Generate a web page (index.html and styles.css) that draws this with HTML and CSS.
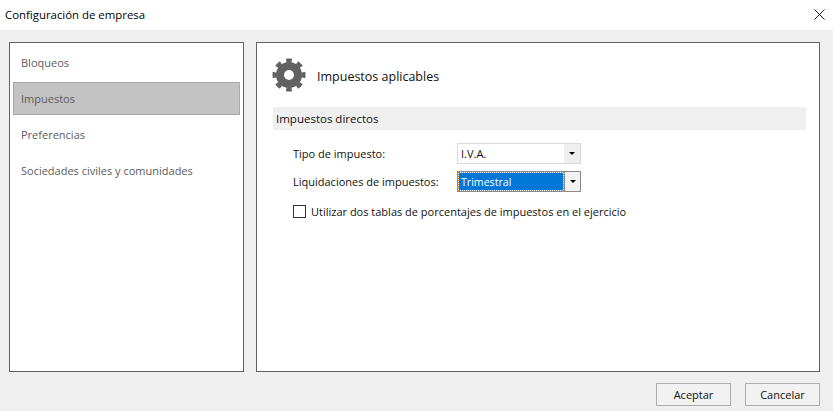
FILE: index.html
```html
<!DOCTYPE html>
<html lang="es">
<head>
<meta charset="utf-8">
<title>Configuración de empresa</title>
<link rel="stylesheet" href="styles.css">
</head>
<body>
<div class="dialog">
  <header class="titlebar">
    <span class="title">Configuración de empresa</span>
    <svg class="close" width="11" height="11" viewBox="0 0 11 11"><path d="M0.5 0.5L10.5 10.5M10.5 0.5L0.5 10.5" stroke="#222" stroke-width="1" fill="none"/></svg>
  </header>
  <main class="body">
    <nav class="sidebar">
      <a class="nav-item">Bloqueos</a>
      <a class="nav-item selected">Impuestos</a>
      <a class="nav-item">Preferencias</a>
      <a class="nav-item">Sociedades civiles y comunidades</a>
    </nav>
    <section class="content">
      <div class="heading">
        <svg class="gear" width="34" height="34" viewBox="0 0 34 34">
          <circle cx="17" cy="17" r="9" fill="none" stroke="#616161" stroke-width="8"/>
          <circle cx="17" cy="17" r="14.5" fill="none" stroke="#616161" stroke-width="4" pathLength="88" stroke-dasharray="5.5 5.5" stroke-dashoffset="2.75"/>
        </svg>
        <span class="heading-text">Impuestos aplicables</span>
      </div>
      <div class="band">Impuestos directos</div>
      <div class="form">
        <div class="row">
          <label class="label">Tipo de impuesto:</label>
          <div class="combo">
            <span class="combo-value">I.V.A.</span>
            <span class="combo-btn"><i class="arrow"></i></span>
          </div>
        </div>
        <div class="row">
          <label class="label">Liquidaciones de impuestos:</label>
          <div class="combo focused">
            <span class="combo-value"><span class="sel">Trimestral</span></span>
            <span class="combo-btn"><i class="arrow"></i></span>
          </div>
        </div>
        <div class="check-row">
          <span class="checkbox"></span>
          <span class="check-label">Utilizar dos tablas de porcentajes de impuestos en el ejercicio</span>
        </div>
      </div>
    </section>
  </main>
  <footer class="footer">
    <button class="btn">Aceptar</button>
    <button class="btn">Cancelar</button>
  </footer>
</div>
</body>
</html>
```
FILE: styles.css
```css
* { box-sizing: border-box; }
html, body { margin: 0; padding: 0; }
body {
  width: 833px;
  height: 411px;
  overflow: hidden;
  font-family: "Open Sans", "Noto Sans", sans-serif;
  font-size: 11px;
  color: #111;
  background: #efefef;
}
.dialog { display: flex; flex-direction: column; height: 411px; }
.titlebar {
  height: 30px;
  background: #fff;
  display: flex;
  align-items: center;
  justify-content: space-between;
  padding: 0 8px 2px 5px;
  flex: none;
}
.title { font-size: 11.4px; color: #000; }
.body {
  display: flex;
  gap: 12px;
  padding: 12px 13px 0 9px;
  height: 342px;
  flex: none;
}
.sidebar {
  width: 235px;
  background: #fff;
  border: 1px solid #616161;
  padding: 1px 3px 3px;
  display: flex;
  flex-direction: column;
}
.nav-item {
  height: 36px;
  display: flex;
  align-items: center;
  padding-left: 8px;
  color: #5c5c5c;
}
.nav-item.selected {
  height: 33px;
  margin: 1.5px 0;
  background: #c3c3c3;
  border: 1px solid #a9a9a9;
  padding-left: 7px;
}
.content {
  flex: 1;
  background: #fff;
  border: 1px solid #616161;
  padding: 15px 13px 0 16px;
}
.heading { display: flex; align-items: center; height: 34px; gap: 11px; }
.gear { flex: none; margin-left: -1px; }
.heading-text { font-size: 12.5px; color: #111; margin-top: 2px; }
.band {
  height: 23px;
  margin-top: 15px;
  background: #efefef;
  display: flex;
  align-items: center;
  padding-left: 3px;
  font-size: 11.5px;
}
.form { padding: 13px 0 0 20px; }
.row { display: flex; align-items: center; height: 21px; margin-bottom: 7px; }
.label { width: 164px; flex: none; }
.combo {
  width: 124px;
  height: 21px;
  display: flex;
  border: 1px solid #d9d9d9;
  background: #fff;
}
.combo-value { flex: 1; display: flex; align-items: center; padding-left: 3px; }
.combo-btn {
  width: 16px;
  flex: none;
  background: #efefef;
  display: flex;
  align-items: center;
  justify-content: center;
}
.arrow {
  width: 0;
  height: 0;
  border-left: 3px solid transparent;
  border-right: 3px solid transparent;
  border-top: 3px solid #000;
}
.combo.focused { border-color: #8a8a8a; }
.combo.focused .combo-value { padding: 1px; }
.combo.focused .combo-btn { border-left: 1px solid #8a8a8a; background: #f2f2f2; }
.sel {
  flex: 1;
  height: 100%;
  display: flex;
  align-items: center;
  background: #0078d7;
  color: #fff;
  outline: 1px dotted #e07b00;
  outline-offset: 0;
  padding-left: 2px;
  font-size: 10.6px;
}
.check-row { display: flex; align-items: center; gap: 5px; margin-top: 11px; height: 16px; }
.checkbox { width: 13px; height: 13px; border: 1px solid #333; background: #fff; flex: none; }
.footer {
  flex: 1;
  display: flex;
  justify-content: flex-end;
  gap: 14px;
  padding: 11px 13px 0 0;
}
.btn {
  width: 75px;
  height: 23px;
  border: 1px solid #adadad;
  background: #f2f2f2;
  font: inherit;
  color: #111;
  padding: 0;
}
```
